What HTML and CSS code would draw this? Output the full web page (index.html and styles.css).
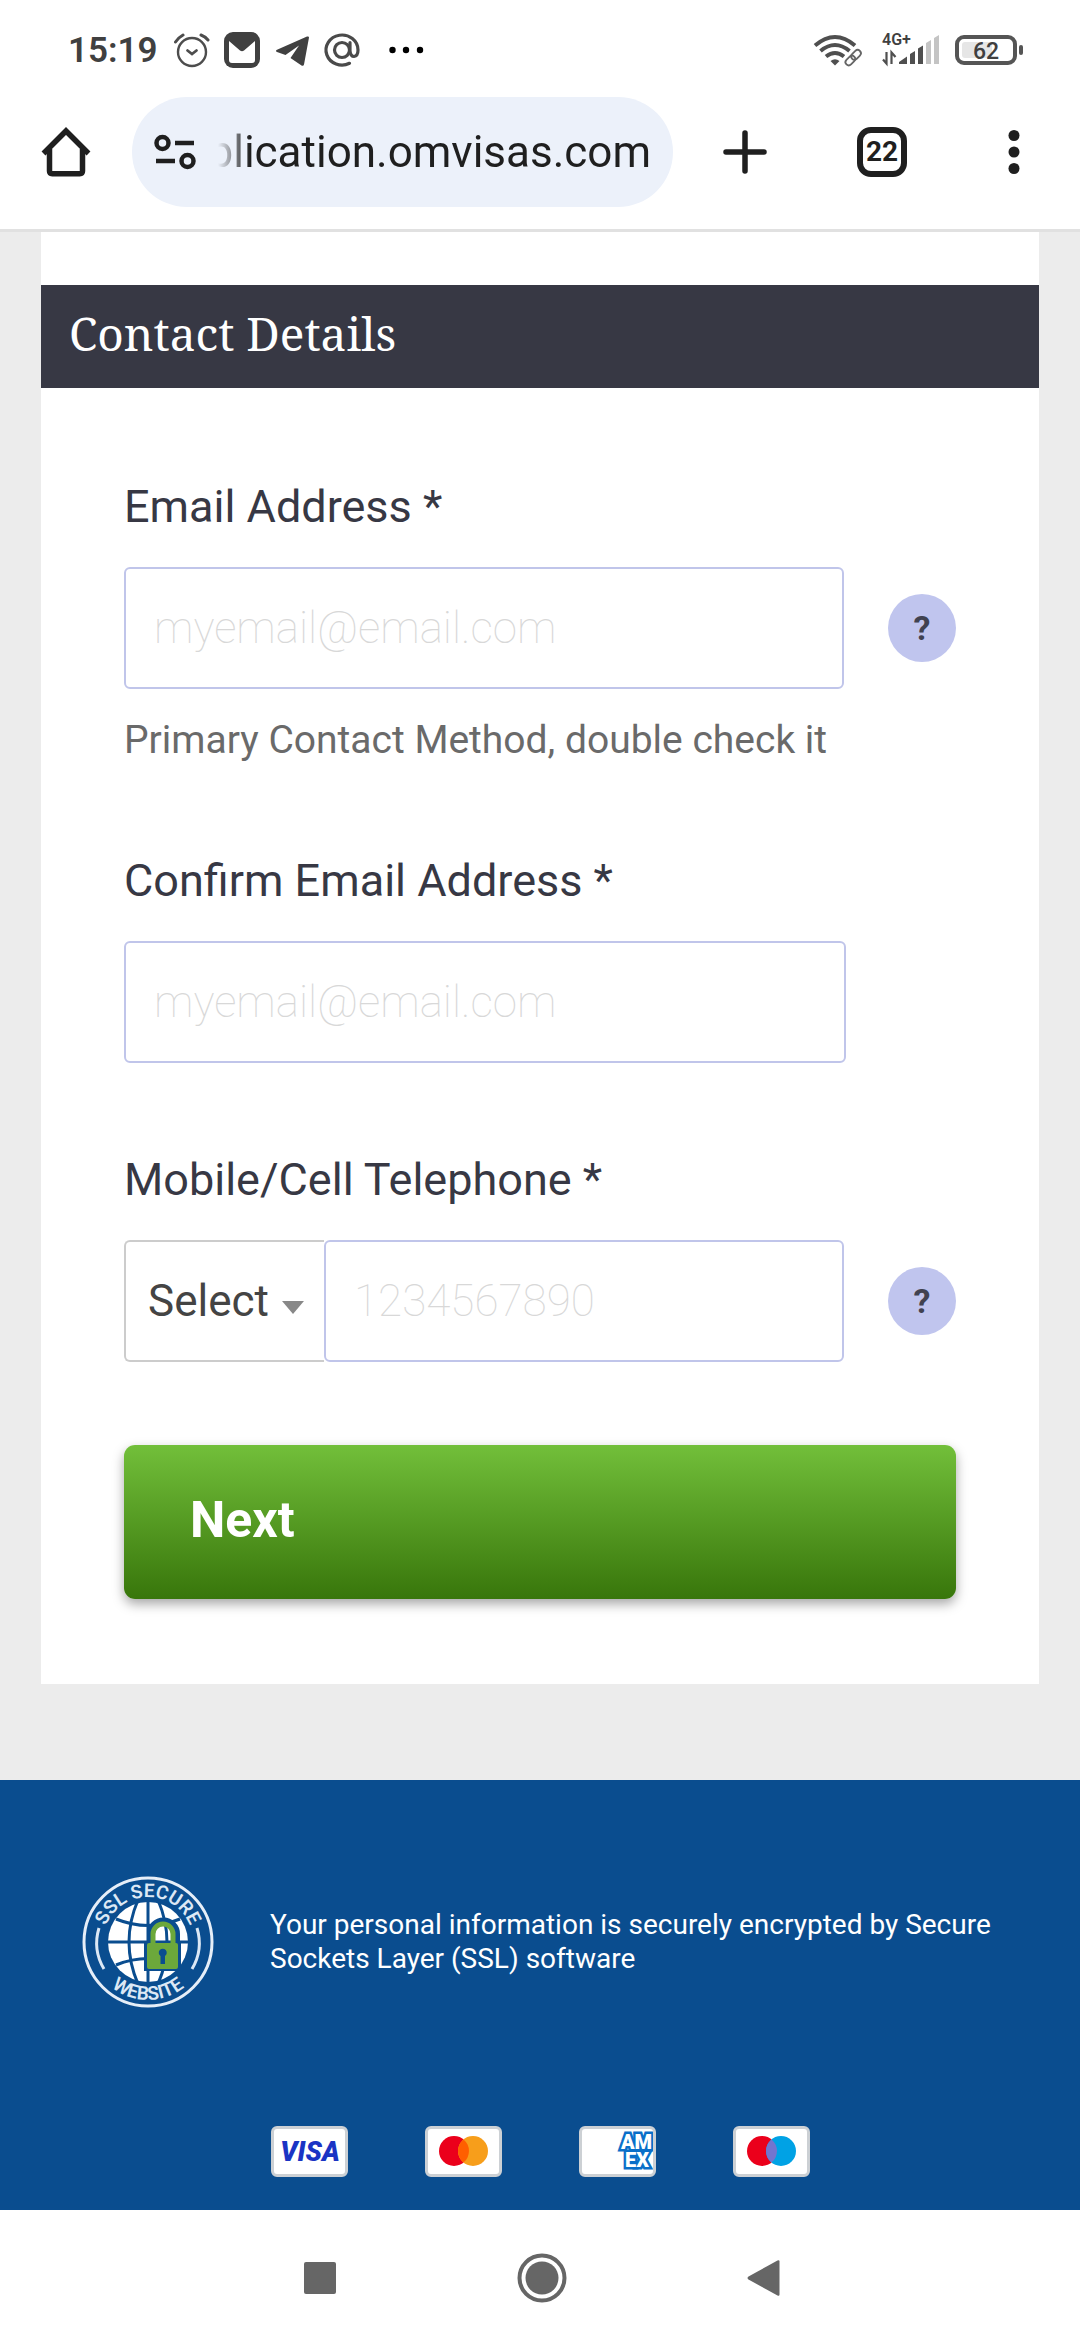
FILE: index.html
```html
<!DOCTYPE html>
<html lang="en">
<head>
    <meta charset="UTF-8">
    <meta name="viewport" content="width=device-width, initial-scale=1.0">
    <title>Contact Details</title>
    <link rel="stylesheet" href="styles.css">
</head>
<body>
    <div class="status-bar">
        <span class="clock">15:19</span>
        <svg class="status-icons" width="250" height="40" viewBox="174 30 250 40">
            <!-- alarm -->
            <g fill="none" stroke="#4d4d4d" stroke-linecap="round">
                <circle cx="192" cy="52" r="14" stroke-width="2.4"/>
                <path d="M187.500 50.500l4.500 3.500 4.500-3.500" stroke-width="2.8"/>
                <path d="M175.500 42q3-4.500 7.500-7M208 40q-3-3.500-7-5" stroke-width="3"/>
            </g>
            <!-- mail -->
            <rect x="224" y="32" width="36" height="36" rx="9" fill="#404040"/>
            <path d="M229 41l11 9.500q2 1.500 4 0l11-9.500v19q0 3-3 3h-20q-3 0-3-3z" fill="#fff"/>
            <!-- telegram -->
            <path d="M309 37.500l-5 27q-.500 2-2.500 1l-11-7.500 8.500-12.500-13.500 9.500-8.500-3q-2-1 0-2.200l30-13.200q2-.600 2 .900z" fill="#404040"/>
            <!-- at sign -->
            <g fill="none" stroke="#4a4a4a" stroke-width="3.200" stroke-linecap="round">
                <circle cx="342" cy="50" r="7.500"/>
                <path d="M350 42.500v8.500q.500 5.500 4 5.500 4-.500 4-6.500a16 15 0 1 0-8.500 13.300"/>
            </g>
            <g fill="#000"><circle cx="392.500" cy="50" r="3.200"/><circle cx="406" cy="50" r="3.200"/><circle cx="420" cy="50" r="3.200"/></g>
        </svg>
        <svg class="status-signal" width="212" height="40" viewBox="812 30 212 40">
            <!-- wifi -->
            <g fill="none" stroke="#4f4f4f" stroke-width="4">
                <path d="M815 45.500q20-17 40 0M820.500 51q14.500-12 29 0M826 56.500q9-7 18 0"/>
            </g>
            <path d="M830.500 61q4.500-3.500 9 0l-4.500 4.500z" fill="#4f4f4f"/>
            <g fill="none" stroke="#666" stroke-width="1.800" transform="rotate(-45 853 57.500)">
                <rect x="843.500" y="54.500" width="11" height="6.500" rx="3.200"/>
                <rect x="851.500" y="54.500" width="11" height="6.500" rx="3.200"/>
            </g>
            <!-- mobile network -->
            <text x="882" y="45" class="net-label">4G+</text>
            <path d="M886.500 52v11.500l-3.500-4M891.500 64V52.500l4 4.500" fill="none" stroke="#4f4f4f" stroke-width="2.200"/>
            <g fill="#4f4f4f"><path d="M899 64v-2l8-5.500V64zM910 64V54l5-3v13zM918 64V48.500l5-3V64z"/></g>
            <g fill="#c4c4c4"><path d="M926 64V43l5-3v24zM934 64V38l5-3v29z"/></g>
            <!-- battery -->
            <rect x="962" y="42" width="30" height="16" rx="3" fill="#e6e6e6"/>
            <rect x="957" y="37" width="58" height="26" rx="7" fill="none" stroke="#555" stroke-width="4"/>
            <rect x="1019" y="45" width="4" height="10" rx="2" fill="#555"/>
            <text x="986" y="59" class="battery-label">62</text>
        </svg>
    </div>

    <div class="browser-bar">
        <button type="button" class="bar-btn" aria-label="Home">
            <svg width="50" height="50" viewBox="0 0 50 50" fill="none" stroke="#1f1f1f" stroke-width="5.500">
                <path d="M8.500 22v22q0 2.700 2.700 2.700h27.600q2.700 0 2.700-2.700V22" stroke-linejoin="round"/>
                <path d="M2.500 26.500L25 4l22.500 22.500"/>
            </svg>
        </button>
        <div class="url-pill">
            <svg width="42" height="36" viewBox="0 0 42 36" fill="none" stroke="#1f1f1f" stroke-width="4.500">
                <circle cx="8.500" cy="9" r="6"/><path d="M21 9h19"/>
                <circle cx="33.500" cy="27" r="6"/><path d="M2 27h19"/>
            </svg>
            <input type="text" class="url" aria-label="Address" value="application.omvisas.com">
        </div>
        <button type="button" class="bar-btn new-tab" aria-label="New tab">
            <svg width="44" height="44" viewBox="0 0 44 44" stroke="#1f1f1f" stroke-width="5.500" stroke-linecap="round"><path d="M22 3v38M3 22h38"/></svg>
        </button>
        <button type="button" class="bar-btn tab-count">22</button>
        <button type="button" class="bar-btn" aria-label="More">
            <svg width="12" height="44" viewBox="0 0 12 44" fill="#1f1f1f"><circle cx="6" cy="5.500" r="5.500"/><circle cx="6" cy="22" r="5.500"/><circle cx="6" cy="38.500" r="5.500"/></svg>
        </button>
    </div>

    <main class="page">
        <form class="card">
            <h2 class="card-title">Contact Details</h2>

            <div class="card-body">
                <div class="field">
                    <label for="email">Email Address *</label>
                    <div class="field-row">
                        <input type="email" id="email" class="text-input" placeholder="myemail@email.com">
                        <button type="button" class="help">?</button>
                    </div>
                    <p class="hint">Primary Contact Method, double check it</p>
                </div>

                <div class="field">
                    <label for="email2">Confirm Email Address *</label>
                    <div class="field-row no-help">
                        <input type="email" id="email2" class="text-input" placeholder="myemail@email.com">
                    </div>
                </div>

                <div class="field">
                    <label for="phone">Mobile/Cell Telephone *</label>
                    <div class="field-row">
                        <div class="phone-group">
                            <div class="code-wrap">
                                <select class="code" aria-label="Country code">
                                    <option>Select</option>
                                </select>
                            </div>
                            <input type="tel" id="phone" class="text-input" placeholder="1234567890">
                        </div>
                        <button type="button" class="help">?</button>
                    </div>
                </div>

                <button type="submit" class="next">Next</button>
            </div>
        </form>
    </main>

    <footer class="footer">
        <div class="secure">
            <svg class="seal" width="132" height="132" viewBox="0 0 132 132">
                <defs>
                    <path id="arc-top" d="M21 66a45 45 0 0 1 90 0"/>
                    <path id="arc-bottom" d="M8 66a58 58 0 0 0 116 0"/>
                </defs>
                <circle cx="66" cy="66" r="64" fill="none" stroke="#e6eef8" stroke-width="3"/>
                <path d="M17 52a51 51 0 0 0 5 41M115 52a51 51 0 0 1-5 41" fill="none" stroke="#dce8f5" stroke-width="3"/>
                <circle cx="66" cy="66" r="40" fill="#fff"/>
                <g fill="none" stroke="#0a4d8f" stroke-width="3">
                    <path d="M66 26v80M26 66h80M34 43q32 13 64 0M34 89q32-13 64 0"/>
                    <path d="M56 24q-18 42 0 84M76 24q18 42 0 84"/>
                </g>
                <path d="M69 68V58a12 12 0 0 1 25 0v10" fill="none" stroke="#0a4d8f" stroke-width="8"/>
                <rect x="62" y="66" width="37" height="29" fill="#0a4d8f"/>
                <path d="M71 68V58a10 10 0 0 1 20 0v10" fill="none" stroke="#6ca83b" stroke-width="5"/>
                <rect x="65" y="67" width="31" height="26" rx="2" fill="#6ca83b"/>
                <path d="M78.500 80a4 4 0 1 1 4.500 0v8h-4.500z" fill="#0a4d8f"/>
                <text class="seal-text"><textPath href="#arc-top" startOffset="50%">SSL SECURE</textPath></text>
                <text class="seal-text"><textPath href="#arc-bottom" startOffset="50%">WEBSITE</textPath></text>
            </svg>
            <p>Your personal information is securely encrypted by Secure Sockets Layer (SSL) software</p>
        </div>
        <div class="payments">
            <svg class="pay" viewBox="3 3 71 45">
                <text x="39" y="35" class="visa">VISA</text>
            </svg>
            <svg class="pay" viewBox="3 3 71 45">
                <circle cx="29" cy="25" r="15" fill="#eb001b"/>
                <circle cx="48" cy="25" r="15" fill="#f79e1b"/>
                <path d="M38.500 13.400a15 15 0 0 1 0 23.200a15 15 0 0 1 0-23.200" fill="#ff5f00"/>
            </svg>
            <svg class="pay" viewBox="3 3 71 45">
                <text class="amex"><tspan x="42" y="23">AM</tspan><tspan x="46" y="41">EX</tspan></text>
            </svg>
            <svg class="pay" viewBox="3 3 71 45">
                <circle cx="29" cy="25" r="15" fill="#eb001b"/>
                <circle cx="48" cy="25" r="15" fill="#00a2e5"/>
                <path d="M38.500 13.400a15 15 0 0 1 0 23.200a15 15 0 0 1 0-23.200" fill="#7375cf"/>
            </svg>
        </div>
    </footer>

    <nav class="android-nav">
        <button type="button" aria-label="Recent apps">
            <svg width="50" height="50" viewBox="0 0 50 50" fill="#666"><rect x="9" y="9" width="32" height="32" rx="2"/></svg>
        </button>
        <button type="button" aria-label="Home screen">
            <svg width="50" height="50" viewBox="0 0 50 50" fill="#666"><circle cx="25" cy="25" r="16.500"/><circle cx="25" cy="25" r="22.500" fill="none" stroke="#666" stroke-width="4"/></svg>
        </button>
        <button type="button" aria-label="Back">
            <svg width="50" height="50" viewBox="0 0 50 50" fill="#666"><path d="M9.500 23.500L38.500 7.500q2-1 2 1v33q0 2-2 1L9.500 26.500q-2-1.500 0-3z"/></svg>
        </button>
    </nav>
</body>
</html>
```
FILE: styles.css
```css
* {
    box-sizing: border-box;
}
body {
    margin: 0;
    min-height: 100vh;
    display: flex;
    flex-direction: column;
    background-color: #fff;
    font-family: Roboto, "Liberation Sans", sans-serif;
    color: #373844;
}
button {
    border: 0;
    padding: 0;
    background: none;
    font-family: inherit;
}
svg {
    display: block;
}

/* Phone status bar */
.status-bar {
    display: flex;
    align-items: center;
    height: 97px;
    padding: 3px 56px 0 68px;
}
.clock {
    width: 106px;
    font-size: 35px;
    font-weight: 600;
    color: #404040;
}
.status-signal {
    margin-left: auto;
}
.net-label {
    font-size: 16px;
    font-weight: 600;
    fill: #404040;
}
.battery-label {
    font-size: 23px;
    font-weight: 500;
    text-anchor: middle;
    fill: #404040;
}

/* Browser toolbar */
.browser-bar {
    display: flex;
    align-items: center;
    height: 135px;
    padding: 0 60px 22px 41px;
    border-bottom: 3px solid #e1e1e1;
}
.bar-btn {
    flex: none;
}
.url-pill {
    flex: 1;
    display: flex;
    align-items: center;
    min-width: 0;
    height: 110px;
    margin: 0 50px 0 41px;
    padding: 0 22px;
    border-radius: 55px;
    background-color: #ecf1fa;
}
.url-pill svg {
    flex: none;
}
.url {
    flex: 1;
    min-width: 0;
    height: 60px;
    margin-left: 22px;
    padding: 0;
    border: 0;
    background: none;
    font-family: inherit;
    font-size: 44px;
    color: #1f1f1f;
    /* long hosts keep their end in view and fade out on the left */
    direction: rtl;
    text-align: right;
    mask-image: linear-gradient(to right, transparent, #000 32px);
}
.tab-count {
    width: 50px;
    height: 50px;
    margin: 0 101px 0 90px;
    border: 6px solid #1f1f1f;
    border-radius: 14px;
    font-size: 28px;
    line-height: 38px;
    font-weight: 700;
    color: #1f1f1f;
}

/* Form */
.page {
    padding: 0 41px 96px;
    background-color: #ececec;
}
.card {
    padding-top: 53px;
    background-color: #fff;
}
.card-title {
    margin: 0;
    padding: 0 28px 6px;
    background-color: #373844;
    color: #fff;
    font-family: "Noto Serif", "Droid Serif", "Liberation Serif", serif;
    font-size: 46px;
    line-height: 97px;
    font-weight: 400;
}
.card-body {
    padding: 90px 83px 85px;
}
.field + .field {
    margin-top: 88px;
}
.field label {
    display: block;
    margin-bottom: 31px;
    font-size: 45px;
    line-height: 58px;
}
.field-row {
    display: flex;
    align-items: center;
    gap: 44px;
}
.no-help {
    padding-right: 110px;
}
.text-input {
    flex: 1;
    min-width: 0;
    height: 122px;
    padding: 0 28px;
    border: 2px solid #c0c5ea;
    border-radius: 6px;
    background-color: #fff;
    font-family: inherit;
    font-size: 44px;
    color: #444;
}
.text-input::placeholder {
    color: #d8d8d8;
    font-weight: 100;
    opacity: 1;
}
.help {
    flex: none;
    width: 68px;
    height: 68px;
    border-radius: 50%;
    background-color: #c0c5ee;
    color: #414250;
    font-size: 34px;
    font-weight: 700;
}
.hint {
    margin: 27px 0 0;
    font-size: 39px;
    line-height: 48px;
    color: #6a6a6a;
}
.phone-group {
    flex: 1;
    display: flex;
    min-width: 0;
}
.code-wrap {
    position: relative;
    width: 200px;
}
.code-wrap::after {
    content: "";
    position: absolute;
    top: 61px;
    right: 20px;
    border: 11px solid transparent;
    border-top: 13px solid #888;
    border-bottom: 0;
    pointer-events: none;
}
.code {
    appearance: none;
    width: 100%;
    height: 122px;
    padding: 0 22px;
    border: 2px solid #ccc;
    border-right: 0;
    border-radius: 6px 0 0 6px;
    background-color: #fff;
    font-family: inherit;
    font-size: 44px;
    color: #444;
}
.next {
    display: block;
    width: 100%;
    height: 154px;
    margin-top: 83px;
    padding: 0 66px 4px;
    border-radius: 11px;
    background: linear-gradient(#72bf3a, #38760b);
    box-shadow: 0 5px 12px rgba(0, 0, 0, 0.35);
    color: #fff;
    font-size: 50px;
    font-weight: 700;
    text-align: left;
}

/* Footer */
.footer {
    flex: 1;
    padding: 96px 82px 32px;
    background-color: #0a4d8f;
    color: #fff;
}
.secure {
    display: flex;
    align-items: center;
    gap: 56px;
}
.seal {
    flex: none;
}
.secure p {
    margin: 0;
    font-size: 28px;
    line-height: 34px;
}
.seal-text {
    font-size: 19px;
    font-weight: 600;
    text-anchor: middle;
    fill: #dce8f5;
}
.payments {
    display: flex;
    justify-content: center;
    gap: 77px;
    margin-top: 118px;
}
.pay {
    width: 77px;
    height: 51px;
    border: 3px solid #ccd0d4;
    border-radius: 6px;
    background-color: #fff;
}
.visa {
    font-size: 27px;
    font-weight: 900;
    font-style: italic;
    text-anchor: middle;
    fill: #1a34c4;
}
.amex {
    font-size: 20px;
    font-weight: 900;
    fill: #fff;
    stroke: #0a6fc9;
    stroke-width: 5px;
    paint-order: stroke;
}

/* Android buttons */
.android-nav {
    display: flex;
    justify-content: center;
    align-items: center;
    gap: 172px;
    height: 130px;
    padding: 6px 0 0 4px;
    background-color: #fff;
}
```
